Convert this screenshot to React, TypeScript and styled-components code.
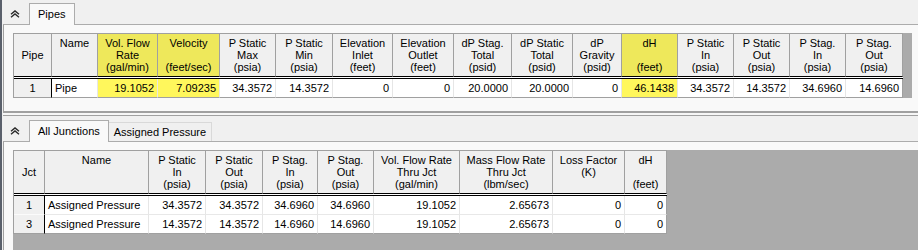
import React from "react";
import styled, { createGlobalStyle } from "styled-components";

const GlobalStyle = createGlobalStyle`
  html, body {
    margin: 0;
    padding: 0;
    background: #f0f0f0;
  }
  body {
    font-family: "Liberation Sans", Arial, sans-serif;
    font-size: 11px;
    color: #000;
  }
`;

type Col = { w: number; head: string[]; kind: "row" | "text" | "num"; hl?: boolean };

const pipeCols: Col[] = [
  { w: 38, head: ["Pipe"], kind: "row" },
  { w: 46, head: ["Name"], kind: "text" },
  { w: 60, head: ["Vol. Flow", "Rate", "(gal/min)"], kind: "num", hl: true },
  { w: 62, head: ["Velocity", "", "(feet/sec)"], kind: "num", hl: true },
  { w: 56, head: ["P Static", "Max", "(psia)"], kind: "num" },
  { w: 57, head: ["P Static", "Min", "(psia)"], kind: "num" },
  { w: 60, head: ["Elevation", "Inlet", "(feet)"], kind: "num" },
  { w: 61, head: ["Elevation", "Outlet", "(feet)"], kind: "num" },
  { w: 58, head: ["dP Stag.", "Total", "(psid)"], kind: "num" },
  { w: 61, head: ["dP Static", "Total", "(psid)"], kind: "num" },
  { w: 49, head: ["dP", "Gravity", "(psid)"], kind: "num" },
  { w: 56, head: ["dH", "", "(feet)"], kind: "num", hl: true },
  { w: 56, head: ["P Static", "In", "(psia)"], kind: "num" },
  { w: 56, head: ["P Static", "Out", "(psia)"], kind: "num" },
  { w: 56, head: ["P Stag.", "In", "(psia)"], kind: "num" },
  { w: 57, head: ["P Stag.", "Out", "(psia)"], kind: "num" },
];

const pipeRows = [
  ["1", "Pipe", "19.1052", "7.09235", "34.3572", "14.3572", "0", "0", "20.0000", "20.0000", "0", "46.1438", "34.3572", "14.3572", "34.6960", "14.6960"],
];

const jctCols: Col[] = [
  { w: 31, head: ["Jct"], kind: "row" },
  { w: 104, head: ["Name"], kind: "text" },
  { w: 57, head: ["P Static", "In", "(psia)"], kind: "num" },
  { w: 57, head: ["P Static", "Out", "(psia)"], kind: "num" },
  { w: 55, head: ["P Stag.", "In", "(psia)"], kind: "num" },
  { w: 56, head: ["P Stag.", "Out", "(psia)"], kind: "num" },
  { w: 86, head: ["Vol. Flow Rate", "Thru Jct", "(gal/min)"], kind: "num" },
  { w: 93, head: ["Mass Flow Rate", "Thru Jct", "(lbm/sec)"], kind: "num" },
  { w: 72, head: ["Loss Factor", "(K)", ""], kind: "num" },
  { w: 42, head: ["dH", "", "(feet)"], kind: "num" },
];

const jctRows = [
  ["1", "Assigned Pressure", "34.3572", "34.3572", "34.6960", "34.6960", "19.1052", "2.65673", "0", "0"],
  ["3", "Assigned Pressure", "14.3572", "14.3572", "14.6960", "14.6960", "19.1052", "2.65673", "0", "0"],
];

const Window = styled.div`
  display: flex;
  width: 918px;
  height: 250px;
  overflow: hidden;
  background: #f0f0f0;
`;

const EdgeStrip = styled.div`
  width: 2px;
  flex: none;
  background: #5a606b;
`;

const Main = styled.div`
  flex: 1;
  min-width: 0;
  display: flex;
  flex-direction: column;
  padding-left: 1px;
`;

const TabStrip = styled.div<{ $h: number }>`
  height: ${(p) => p.$h}px;
  flex: none;
  display: flex;
  align-items: flex-end;
  position: relative;
  z-index: 1;
`;

const CollapseButton = styled.div`
  width: 24px;
  height: 20px;
  margin-right: 2px;
  display: flex;
  align-items: center;
  justify-content: center;
`;

const Tab = styled.div<{ $active?: boolean }>`
  box-sizing: border-box;
  height: ${(p) => (p.$active ? 22 : 19)}px;
  margin-bottom: ${(p) => (p.$active ? -1 : 0)}px;
  margin-left: ${(p) => (p.$active ? 0 : -1)}px;
  padding: ${(p) => (p.$active ? "0 8px" : "0 5px")};
  display: flex;
  align-items: center;
  border: 1px solid ${(p) => (p.$active ? "#acacac" : "#d9d9d9")};
  border-bottom: none;
  background: ${(p) => (p.$active ? "#f9f9f9" : "#f0f0f0")};
  order: ${(p) => (p.$active ? 0 : 1)};
  position: relative;
  z-index: ${(p) => (p.$active ? 2 : 1)};
  white-space: nowrap;
  line-height: 13px;
`;

const Content = styled.div<{ $h?: number; $padR: number }>`
  box-sizing: border-box;
  ${(p) => (p.$h ? `height: ${p.$h}px; flex: none;` : "flex: 1; min-height: 0;")}
  display: flex;
  flex-direction: column;
  padding: 8px ${(p) => p.$padR}px 0 9px;
  background: #f9f9f9;
  border-left: 1px solid #a0a0a0;
  border-top: 1px solid #acacac;
  border-bottom: ${(p) => (p.$h ? "2px solid #a0a0a0" : "none")};
`;

const Splitter = styled.div`
  box-sizing: border-box;
  height: 3px;
  flex: none;
  background: #f6f6f6;
  border-bottom: 1px solid #a0a0a0;
`;

const GridFrame = styled.div<{ $fill?: boolean }>`
  display: flex;
  align-items: flex-start;
  background: #ababab;
  ${(p) => (p.$fill ? "flex: 1; min-height: 0;" : "flex: none;")}
`;

const Grid = styled.div<{ $cols: string }>`
  display: grid;
  grid-template-columns: ${(p) => p.$cols};
  border-left: 1px solid #a0a0a0;
  border-top: 1px solid #a0a0a0;
  flex: none;
`;

const HeadCell = styled.div<{ $hl?: boolean; $row?: boolean }>`
  box-sizing: border-box;
  height: 43px;
  padding-top: ${(p) => (p.$row ? 0 : 3)}px;
  display: flex;
  flex-direction: column;
  justify-content: ${(p) => (p.$row ? "center" : "flex-start")};
  text-align: center;
  line-height: 12px;
  white-space: nowrap;
  overflow: hidden;
  background: ${(p) => (p.$hl ? "#eee85b" : "#f0f0f0")};
  border-right: 1px solid #a0a0a0;
  border-bottom: 1px solid #000;
`;

const HeadLine = styled.div`
  height: 12px;
`;

const Rule = styled.div`
  grid-column: 1 / -1;
  height: 1px;
  background: #fff;
  border-bottom: 1px solid #000;
`;

const Cell = styled.div<{ $kind: "row" | "text" | "num"; $hl?: boolean; $last?: boolean; $edge?: boolean }>`
  box-sizing: border-box;
  height: 19px;
  line-height: 18px;
  padding: 0 3px;
  white-space: nowrap;
  overflow: hidden;
  text-align: ${(p) => (p.$kind === "num" ? "right" : p.$kind === "row" ? "center" : "left")};
  background: ${(p) => (p.$kind === "row" ? "#f0f0f0" : p.$hl ? "#fff75c" : "#fff")};
  border-right: 1px solid
    ${(p) => (p.$kind === "row" ? "#000" : p.$edge ? "#a0a0a0" : "#e6e6e6")};
  border-bottom: 1px solid
    ${(p) => (p.$last ? "#a0a0a0" : p.$kind === "row" ? "#fbfbfb" : "#e8e8e8")};
`;

const CollapseIcon = () => (
  <svg width="10" height="8" viewBox="0 0 10 8">
    <path
      d="M1 4.2 L5 0.9 L9 4.2 M1 7.3 L5 4 L9 7.3"
      stroke="#2a2a2a"
      strokeWidth="1.4"
      fill="none"
    />
  </svg>
);

const DataGrid = ({ cols, rows }: { cols: Col[]; rows: string[][] }) => (
  <Grid $cols={cols.map((c) => `${c.w}px`).join(" ")}>
    {cols.map((c, i) => (
      <HeadCell key={`h${i}`} $hl={c.hl} $row={c.kind === "row"}>
        {c.kind === "row"
          ? c.head[0]
          : [0, 1, 2].map((n) => <HeadLine key={n}>{c.head[n] || ""}</HeadLine>)}
      </HeadCell>
    ))}
    <Rule />
    {rows.map((r, ri) =>
      r.map((v, ci) => (
        <Cell
          key={`${ri}-${ci}`}
          $kind={cols[ci].kind}
          $hl={cols[ci].hl}
          $last={ri === rows.length - 1}
          $edge={ci === cols.length - 1}
        >
          {v}
        </Cell>
      ))
    )}
  </Grid>
);

export default function App() {
  return (
    <>
      <GlobalStyle />
      <Window>
        <EdgeStrip />
        <Main>
          <TabStrip $h={24}>
            <CollapseButton>
              <CollapseIcon />
            </CollapseButton>
            <Tab $active>Pipes</Tab>
          </TabStrip>
          <Content $h={89} $padR={6}>
            <GridFrame>
              <DataGrid cols={pipeCols} rows={pipeRows} />
            </GridFrame>
          </Content>
          <Splitter />
          <TabStrip $h={25}>
            <CollapseButton>
              <CollapseIcon />
            </CollapseButton>
            <Tab $active>All Junctions</Tab>
            <Tab>Assigned Pressure</Tab>
          </TabStrip>
          <Content $padR={0}>
            <GridFrame $fill>
              <DataGrid cols={jctCols} rows={jctRows} />
            </GridFrame>
          </Content>
        </Main>
      </Window>
    </>
  );
}
